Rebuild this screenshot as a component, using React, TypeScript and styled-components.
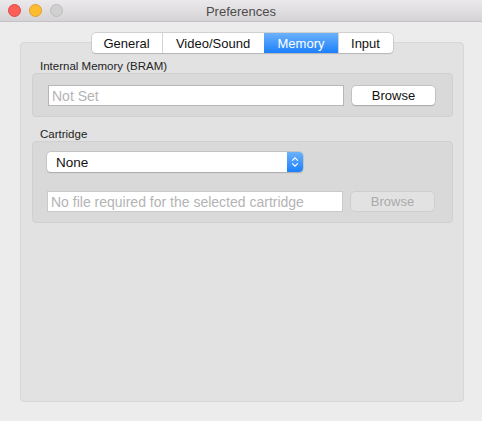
import React from "react";
import styled, { createGlobalStyle } from "styled-components";

const GlobalStyle = createGlobalStyle`
  html, body {
    margin: 0;
    padding: 0;
    background: #ececec;
  }
  body {
    font-family: "Liberation Sans", Arial, sans-serif;
    -webkit-font-smoothing: antialiased;
  }
`;

const tabs = [
  { label: "General", width: 70 },
  { label: "Video/Sound", width: 102 },
  { label: "Memory", width: 74 },
  { label: "Input", width: 55 },
];

const App = () => {
  return (
    <>
      <GlobalStyle />
      <Window>
        <TitleBar>
          <Lights>
            <Light fill="#fc5f57" edge="#df4744" />
            <Light fill="#fdbc2e" edge="#de9f34" />
            <Light fill="#d1d0d1" edge="#bdbcbd" />
          </Lights>
          <Title>Preferences</Title>
        </TitleBar>
        <Body>
          <TabStrip>
            {tabs.map((t) => (
              <Tab key={t.label} w={t.width} active={t.label === "Memory"}>
                {t.label}
              </Tab>
            ))}
          </TabStrip>
          <TabPanel>
            <Section>
              <GroupLabel>Internal Memory (BRAM)</GroupLabel>
              <GroupBox pad="11px 16px 10px 15px">
                <Row>
                  <Field disabled={false}>Not Set</Field>
                  <PushButton disabled={false}>Browse</PushButton>
                </Row>
              </GroupBox>
            </Section>
            <Section>
              <GroupLabel>Cartridge</GroupLabel>
              <GroupBox pad="10px 16px 10px 14px">
                <Popup>
                  <PopupText>None</PopupText>
                  <PopupArrows>
                    <svg width="8" height="12" viewBox="0 0 8 12">
                      <path
                        d="M1.2 4.6 L4 1.8 L6.8 4.6 M1.2 7.4 L4 10.2 L6.8 7.4"
                        fill="none"
                        stroke="#fff"
                        strokeWidth="1.2"
                      />
                    </svg>
                  </PopupArrows>
                </Popup>
                <Row>
                  <Field disabled>No file required for the selected cartridge</Field>
                  <PushButton disabled>Browse</PushButton>
                </Row>
              </GroupBox>
            </Section>
          </TabPanel>
        </Body>
      </Window>
    </>
  );
};

export default App;

const Window = styled.div`
  width: 482px;
  height: 421px;
  display: flex;
  flex-direction: column;
  background: #ececec;
  overflow: hidden;
`;

const TitleBar = styled.div`
  position: relative;
  height: 21px;
  flex-shrink: 0;
  display: flex;
  align-items: center;
  justify-content: center;
  background: linear-gradient(#ebe9eb, #d5d3d5);
  border-bottom: 1px solid #c4c2c4;
`;

const Lights = styled.div`
  position: absolute;
  left: 8px;
  top: 4px;
  display: flex;
  gap: 8px;
`;

const Light = styled.span<{ fill: string; edge: string }>`
  width: 11px;
  height: 11px;
  border-radius: 50%;
  background: ${(p) => p.fill};
  border: 0.5px solid ${(p) => p.edge};
`;

const Title = styled.div`
  font-size: 13px;
  color: #4c4c4c;
  margin-top: 1px;
`;

const Body = styled.div`
  flex: 1;
  display: flex;
  flex-direction: column;
  padding: 11px 18px 19px 20px;
`;

const TabStrip = styled.div`
  align-self: center;
  position: relative;
  z-index: 1;
  margin-bottom: -11px;
  display: flex;
  height: 20px;
  background: #fff;
  border-radius: 4px;
  box-shadow: 0 0 0 0.5px #b9b9b9, 0 0.5px 1px rgba(0, 0, 0, 0.2);
  overflow: hidden;
`;

const Tab = styled.div<{ active: boolean; w: number }>`
  width: ${(p) => p.w}px;
  box-sizing: border-box;
  display: flex;
  align-items: center;
  justify-content: center;
  font-size: 13px;
  color: ${(p) => (p.active ? "#fff" : "#111")};
  background: ${(p) =>
    p.active ? "linear-gradient(#6cb1fa, #1b80fb)" : "transparent"};
  border-left: 1px solid ${(p) => (p.active ? "transparent" : "#d4d4d4")};

  &:first-child {
    border-left: none;
  }
`;

const TabPanel = styled.div`
  flex: 1;
  display: flex;
  flex-direction: column;
  gap: 10px;
  padding: 16px 10px 0 11px;
  background: #e2e2e2;
  border: 1px solid #d7d7d7;
  border-radius: 4px;
`;

const Section = styled.div`
  display: flex;
  flex-direction: column;
`;

const GroupLabel = styled.div`
  font-size: 11.5px;
  line-height: 14px;
  color: #222;
  margin-left: 8px;
`;

const GroupBox = styled.div<{ pad: string }>`
  display: flex;
  flex-direction: column;
  gap: 19px;
  padding: ${(p) => p.pad};
  background: #d9d9d9;
  border: 1px solid #d0d0d0;
  border-radius: 4px;
`;

const Row = styled.div`
  display: flex;
  align-items: center;
  gap: 8px;
`;

const Field = styled.div<{ disabled: boolean }>`
  width: 291px;
  height: 19px;
  display: flex;
  align-items: center;
  padding-left: 3px;
  font-size: 14px;
  color: #b4b4b4;
  background: #fff;
  border: 1px solid ${(p) => (p.disabled ? "#c9c9c9" : "#b6b6b6")};
  white-space: nowrap;
  overflow: hidden;
`;

const PushButton = styled.div<{ disabled: boolean }>`
  width: 83px;
  height: 19px;
  display: flex;
  align-items: center;
  justify-content: center;
  font-size: 13px;
  border-radius: 4px;
  color: ${(p) => (p.disabled ? "#aaa" : "#111")};
  background: ${(p) => (p.disabled ? "#e2e2e2" : "#fff")};
  box-shadow: ${(p) =>
    p.disabled
      ? "0 0 0 0.5px #c4c4c4"
      : "0 0 0 0.5px #b0b0b0, 0 0.5px 1px rgba(0, 0, 0, 0.25)"};
`;

const Popup = styled.div`
  width: 256px;
  height: 20px;
  display: flex;
  border-radius: 4px;
  background: #fff;
  box-shadow: 0 0 0 0.5px #b5b5b5, 0 0.5px 1px rgba(0, 0, 0, 0.25);
  overflow: hidden;
`;

const PopupText = styled.div`
  flex: 1;
  display: flex;
  align-items: center;
  padding-left: 9px;
  font-size: 13.5px;
  color: #111;
`;

const PopupArrows = styled.div`
  width: 16px;
  display: flex;
  align-items: center;
  justify-content: center;
  background: linear-gradient(#6cb1fa, #1b80fb);
`;
